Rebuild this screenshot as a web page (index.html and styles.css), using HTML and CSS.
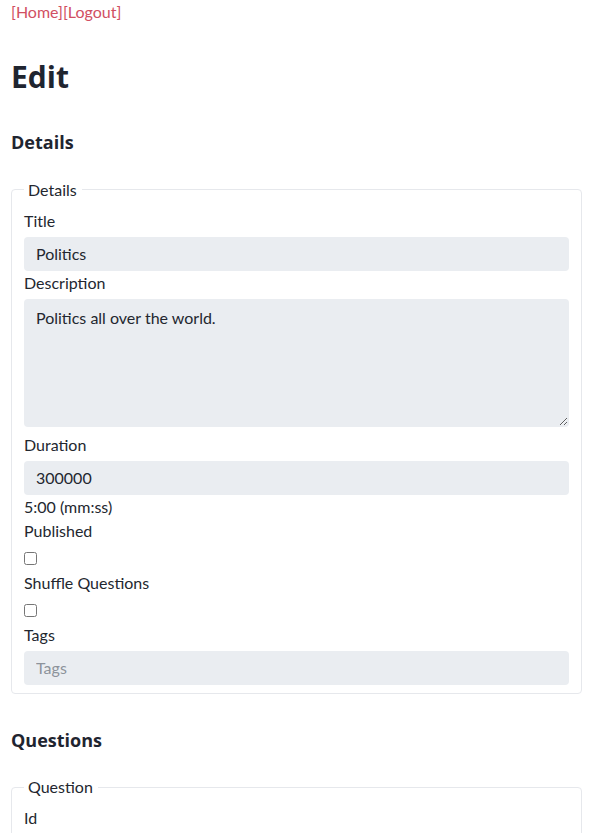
FILE: index.html
```html
<!DOCTYPE html>
<html lang="en">
<head>
<meta charset="utf-8">
<title>Edit</title>
<link rel="stylesheet" href="styles.css">
</head>
<body>
<main class="page">
  <nav class="nav"><a href="#">[Home]</a><a href="#">[Logout]</a></nav>
  <h1 class="title">Edit</h1>
  <h3 class="section">Details</h3>
  <fieldset class="group">
    <legend>Details</legend>
    <label class="label" for="t">Title</label>
    <input class="field" id="t" type="text" value="Politics">
    <label class="label" for="d">Description</label>
    <textarea class="field area" id="d">Politics all over the world.</textarea>
    <label class="label" for="du">Duration</label>
    <input class="field" id="du" type="text" value="300000">
    <div class="hint">5:00 (mm:ss)</div>
    <label class="label" for="p">Published</label>
    <input class="check" id="p" type="checkbox">
    <label class="label" for="s">Shuffle Questions</label>
    <input class="check" id="s" type="checkbox">
    <label class="label" for="tg">Tags</label>
    <input class="field" id="tg" type="text" placeholder="Tags">
  </fieldset>
  <h3 class="section">Questions</h3>
  <fieldset class="group">
    <legend>Question</legend>
    <label class="label" for="qid">Id</label>
    <input class="field" id="qid" type="text" value="">
    <label class="label" for="qt">Text</label>
    <input class="field" id="qt" type="text" value="">
  </fieldset>
</main>
</body>
</html>
```
FILE: styles.css
```css
html, body {
  margin: 0;
  padding: 0;
  background: #ffffff;
}
body {
  font-family: Lato, "Open Sans", sans-serif;
  font-size: 16px;
  line-height: 24px;
  color: #23272f;
}
.page {
  padding: 0 12px 0 11px;
}
.nav {
  height: 24px;
}
.nav a {
  color: #d14f62;
  text-decoration: none;
}
.title {
  margin: 35px 0 0;
  font-family: "Open Sans", Lato, sans-serif;
  font-size: 30px;
  line-height: 1.2;
  font-weight: 700;
  color: #1f2530;
}
.section {
  margin: 37px 0 0;
  font-family: "Open Sans", Lato, sans-serif;
  font-size: 18px;
  line-height: 1.2;
  font-weight: 700;
  color: #1f2530;
}
.group + .section {
  margin-top: 36px;
}
.group {
  margin: 25px 0 0;
  padding: 8px 12px 8px;
  border: 1px solid #e6e8ec;
  border-radius: 4px;
  min-inline-size: 0;
}
.group legend {
  padding: 0 5px 0 4px;
  line-height: 22px;
}
.label {
  display: block;
  margin-bottom: 4px;
}
.field {
  display: block;
  box-sizing: border-box;
  width: 100%;
  height: 34px;
  margin: 0;
  padding: 0 12px 0 11px;
  border: 1px solid transparent;
  border-radius: 4px;
  background: #eaedf1;
  font: inherit;
  color: inherit;
  outline: none;
}
.field::placeholder {
  color: #8d939b;
}
.area {
  height: 128px;
  padding: 6px 12px 6px 11px;
  margin-bottom: 6px;
  resize: vertical;
}
.hint {
  line-height: 24px;
}
.check {
  display: block;
  width: 13px;
  height: 13px;
  margin: 9px 0 6px;
}
```
